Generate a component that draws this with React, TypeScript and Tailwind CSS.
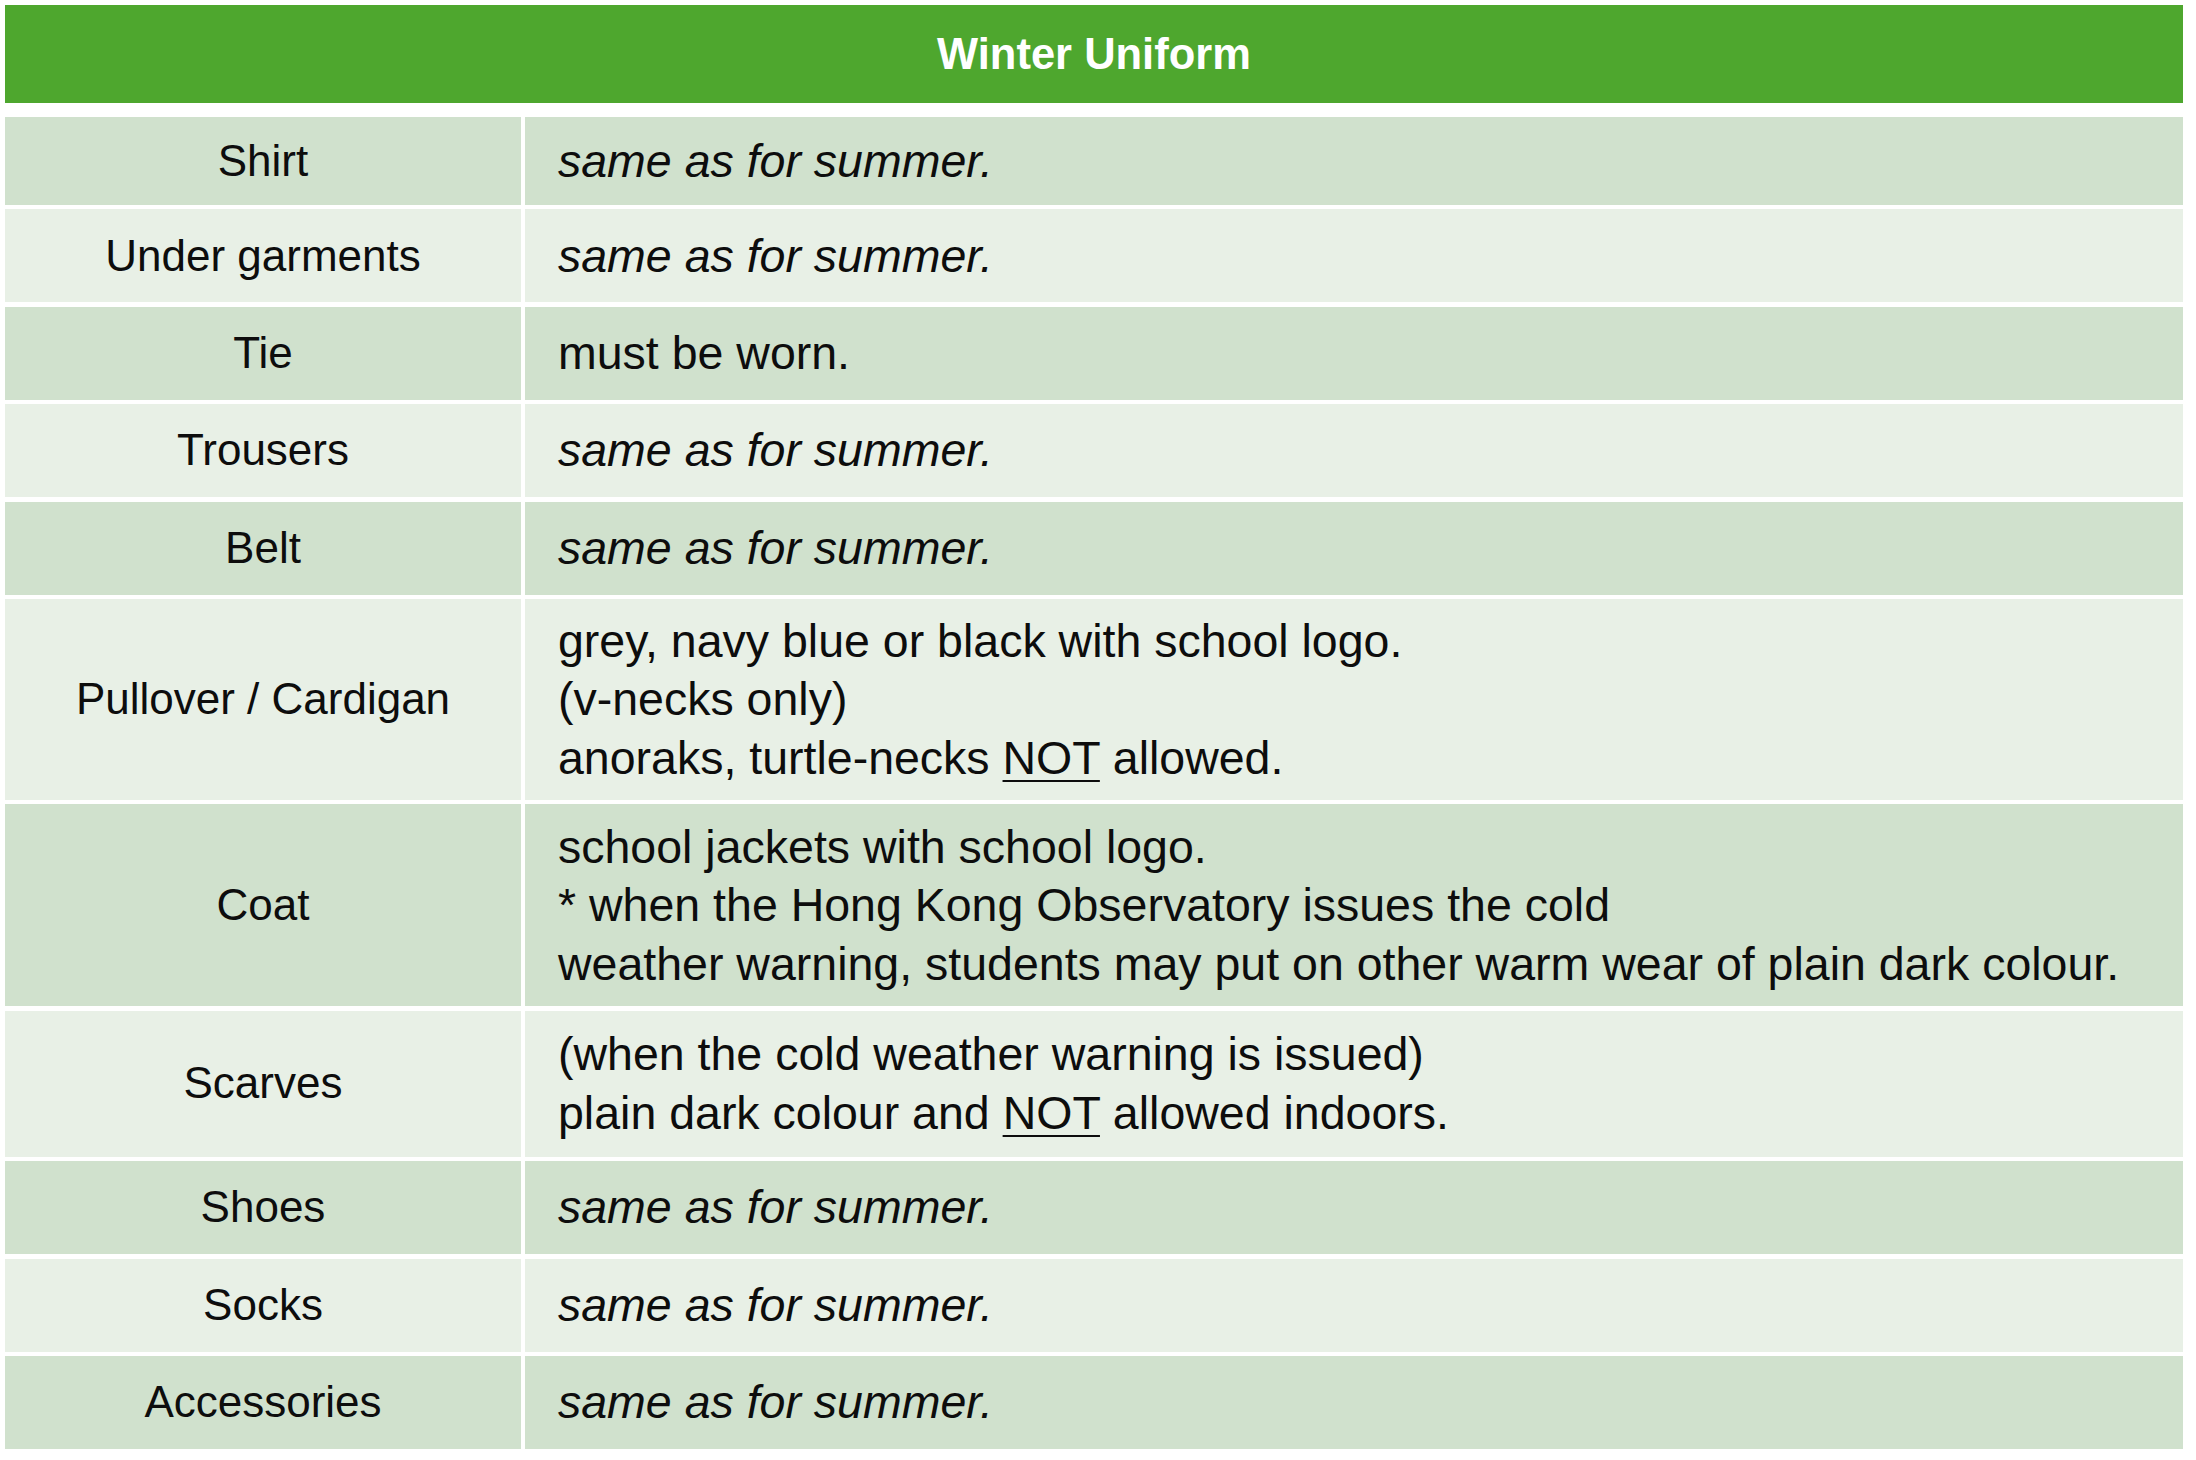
const NOT = <span className="underline decoration-[1.5px] underline-offset-[6px]">NOT</span>;

function Cell({
  label,
  lines,
  italic,
  dark,
  h,
}: {
  label: string;
  lines: React.ReactNode[];
  italic?: boolean;
  dark: boolean;
  h: string;
}) {
  const bg = dark ? "bg-[#d0e1cd]" : "bg-[#e8f0e6]";
  return (
    <div className={`flex gap-[4px] ${h}`}>
      <div className={`w-[516px] shrink-0 flex items-center justify-center text-[44px] ${bg}`}>
        <span>{label}</span>
      </div>
      <div className={`flex-1 flex flex-col justify-center pl-[33px] text-[46.5px] ${bg}`}>
        {lines.map((l, i) => (
          <div key={i} className={`whitespace-nowrap ${italic ? "italic" : ""}`}>
            {l}
          </div>
        ))}
      </div>
    </div>
  );
}

export default function App() {
  const same = ["same as for summer."];
  return (
    <div
      className="w-[2196px] h-[1460px] bg-white pt-[5px] pl-[5px] text-[#0d0d0d] leading-[58.5px]"
      style={{ fontFamily: '"Liberation Sans", Arial, sans-serif' }}
    >
      <div className="w-[2178px] flex flex-col">
        <div className="h-[98px] bg-[#4ea72e] flex items-center justify-center text-white font-bold text-[43.5px]">
          Winter Uniform
        </div>
        <div className="mt-[14px] flex flex-col gap-[4.4px]">
          <Cell label="Shirt" lines={same} italic dark h="h-[88px]" />
          <Cell label="Under garments" lines={same} italic dark={false} h="h-[93px]" />
          <Cell label="Tie" lines={["must be worn."]} dark h="h-[93px]" />
          <Cell label="Trousers" lines={same} italic dark={false} h="h-[93px]" />
          <Cell label="Belt" lines={same} italic dark h="h-[93px]" />
          <Cell
            label="Pullover / Cardigan"
            lines={[
              "grey, navy blue or black with school logo.",
              "(v-necks only)",
              <>anoraks, turtle-necks {NOT} allowed.</>,
            ]}
            dark={false}
            h="h-[201px]"
          />
          <Cell
            label="Coat"
            lines={[
              "school jackets with school logo.",
              "* when the Hong Kong Observatory issues the cold",
              "weather warning, students may put on other warm wear of plain dark colour.",
            ]}
            dark
            h="h-[202px]"
          />
          <Cell
            label="Scarves"
            lines={[
              "(when the cold weather warning is issued)",
              <>plain dark colour and {NOT} allowed indoors.</>,
            ]}
            dark={false}
            h="h-[146px]"
          />
          <Cell label="Shoes" lines={same} italic dark h="h-[93px]" />
          <Cell label="Socks" lines={same} italic dark={false} h="h-[93px]" />
          <Cell label="Accessories" lines={same} italic dark h="h-[93px]" />
        </div>
      </div>
    </div>
  );
}
